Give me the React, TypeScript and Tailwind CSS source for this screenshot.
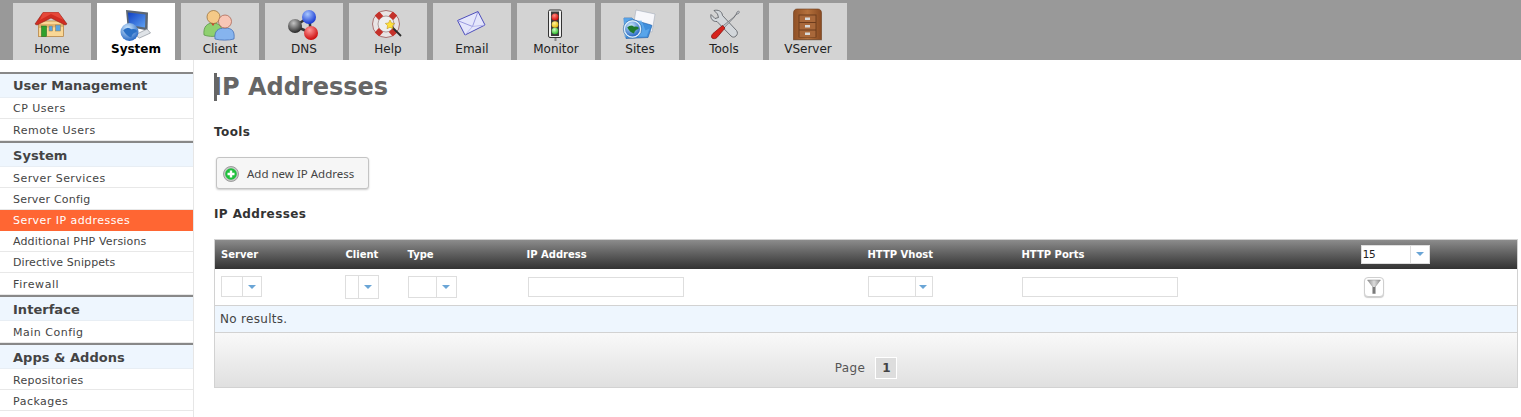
import React from "react";

const Ball = ({ id, c1, c2, cx, cy, r }: { id: string; c1: string; c2: string; cx: number; cy: number; r: number }) => (
  <>
    <defs>
      <radialGradient id={id} cx="40%" cy="30%" r="75%">
        <stop offset="0%" stopColor={c1} />
        <stop offset="100%" stopColor={c2} />
      </radialGradient>
    </defs>
    <circle cx={cx} cy={cy} r={r} fill={`url(#${id})`} />
  </>
);

const Globe = ({ id, cx, cy, r, land }: { id: string; cx: number; cy: number; r: number; land: string }) => (
  <>
    <Ball id={id} c1="#d4ecff" c2="#1a5fc0" cx={cx} cy={cy} r={r} />
    <path
      d={`M${cx - r * 0.7} ${cy - r * 0.2}q${r * 0.5} ${-r * 0.5} ${r * 0.9} ${-r * 0.1}q${r * 0.7} ${-r * 0.1} ${r * 0.6} ${r * 0.3}q${-r * 0.5} ${r * 0.1} ${-r * 0.6} ${r * 0.6}q${-r * 0.5} ${-r * 0.1} ${-r * 0.9} ${-r * 0.8}z`}
      fill={land}
    />
  </>
);

const Box = ({ x, children }: { x: number; children: React.ReactNode }) => (
  <svg width="36" height="36" viewBox={`${x} 6 36 36`} className="block shrink-0 overflow-visible">
    {children}
  </svg>
);

const HomeIcon = () => (
  <Box x={34}>
    <rect x="38.500" y="21" width="25" height="15.500" fill="#f9d796" stroke="#b07a35" strokeWidth="0.7" />
    <path d="M38.500 24h25v3l-25 1z" fill="#c98f44" opacity="0.5" />
    <path d="M35 24L43 12.500h15.500L67 24l-2 1-14-7-14 7z" fill="#d12d22" stroke="#8c1d14" strokeWidth="0.6" />
    <path d="M43 12.500h15.500l5 7.500-12.500-6-11 6z" fill="#e5483a" />
    <rect x="41.500" y="26" width="5" height="10.500" fill="#2ea02c" stroke="#14641a" strokeWidth="0.5" />
    <rect x="49" y="26" width="3.500" height="5" fill="#5aa5e0" stroke="#9a7a40" strokeWidth="0.5" />
    <rect x="55.500" y="25" width="5" height="6" fill="#5aa5e0" stroke="#9a7a40" strokeWidth="0.5" />
  </Box>
);

const SystemIcon = () => (
  <Box x={118}>
    <defs>
      <linearGradient id="sys-s" x1="0" y1="0" x2="1" y2="1">
        <stop offset="0%" stopColor="#0f3fc4" />
        <stop offset="100%" stopColor="#5fa2f2" />
      </linearGradient>
    </defs>
    <path d="M126 10l22 2.500-.5 18-20-4z" fill="#5c6672" />
    <path d="M128 12.500l17.500 2-.5 13-16-2.500z" fill="url(#sys-s)" />
    <path d="M135 35l12-6 3.500 4-11 5z" fill="#dfe3e7" stroke="#7d858e" strokeWidth="0.6" />
    <Globe id="sys-g" cx={129.500} cy={32} r={9} land="#2a70c6" />
  </Box>
);

const ClientIcon = () => (
  <Box x={202}>
    <path d="M204 35c-1-8 3-12 9-12s10 4 9 11c-5 3-13 3-18 1z" fill="#8fd06f" stroke="#4f8f3c" strokeWidth="0.7" />
    <path d="M211 23l2 3 2-3z" fill="#d13a2c" />
    <circle cx="213.500" cy="17" r="6.500" fill="#f5c987" stroke="#94692f" strokeWidth="0.7" />
    <path d="M215 39c-1-8 3-11 10-11s10 3 9 11c-5 1.500-14 1.500-19 0z" fill="#86b4ee" stroke="#3a66b0" strokeWidth="0.7" />
    <circle cx="225" cy="21.500" r="6.500" fill="#f8c6b6" stroke="#a85a48" strokeWidth="0.7" />
  </Box>
);

const DnsIcon = () => (
  <Box x={286}>
    <path d="M295 26L309 17M309 17L311 33M295 26L311 33" stroke="#333" strokeWidth="2.500" />
    <Ball id="dns-k" c1="#c4c4c4" c2="#1c1c1c" cx={295} cy={26} r={7} />
    <Ball id="dns-b" c1="#a9c8ff" c2="#0c2ecf" cx={309} cy={17} r={7} />
    <Ball id="dns-r" c1="#ff9a9a" c2="#c80000" cx={311} cy={33} r={7} />
  </Box>
);

const HelpIcon = () => (
  <Box x={370}>
    <circle cx="386" cy="24" r="11" fill="none" stroke="#e9e4e4" strokeWidth="5.500" />
    <circle cx="386" cy="24" r="13.500" fill="none" stroke="#7a2420" strokeWidth="0.6" />
    <circle cx="386" cy="24" r="8" fill="#eeeeee" stroke="#8a6a6a" strokeWidth="0.6" />
    <path d="M377 13.500l4 4.500M395 13.500l-4 4.500M377 34.500l4-4.500M395 34.500l-4-4.500" stroke="#c4312a" strokeWidth="6" />
    <path d="M392 27l9 9" stroke="#2a2a2a" strokeWidth="1.800" />
    <path d="M390 20l1.500 3 3.200.4-2.300 2.200.7 3.200-3.100-1.600-3 1.600.6-3.200-2.300-2.200 3.200-.4z" fill="#ffe13a" stroke="#b98a10" strokeWidth="0.5" />
  </Box>
);

const EmailIcon = () => (
  <Box x={454}>
    <path d="M457.500 20.500L478 11.500l7 13.500-20 10z" fill="#e4e6fb" stroke="#3d3db5" strokeWidth="0.9" strokeLinejoin="round" />
    <path d="M457.500 20.500l15 6 5.500-15" fill="none" stroke="#8585d8" strokeWidth="0.8" />
    <path d="M465 35l7.500-8.500 12.500-1.500" fill="none" stroke="#a9a9e6" strokeWidth="0.7" />
  </Box>
);

const MonitorIcon = () => (
  <Box x={538}>
    <rect x="554.500" y="36" width="2" height="5" fill="#888" />
    <rect x="548.500" y="10" width="13" height="27.500" rx="1.500" fill="#f2f2f2" stroke="#333" strokeWidth="1" />
    <rect x="551" y="11.500" width="8" height="24.500" fill="#3c3c3c" />
    <Ball id="m-r" c1="#ff8a80" c2="#d40000" cx={555} cy={17} r={3.500} />
    <Ball id="m-y" c1="#fff49a" c2="#e3b400" cx={555} cy={24.500} r={3.300} />
    <Ball id="m-g" c1="#d2ffc4" c2="#1fb51f" cx={555} cy={31} r={3.300} />
  </Box>
);

const SitesIcon = () => (
  <Box x={622}>
    <path d="M636 10l19 4-3 18-19-4z" fill="#f7f7fb" stroke="#9aa4b4" strokeWidth="0.5" />
    <path d="M624 18h8l2 2 17 5 1 .5-4 12-22 1z" fill="#3f8fdd" stroke="#1c5aa5" strokeWidth="0.6" />
    <path d="M623.500 18h9l2 3 7-.5 4 10 4-2-3 8-22 .5z" fill="#64aef0" opacity="0.7" />
    <circle cx="632.500" cy="29" r="9.200" fill="#dff0fb" stroke="#1b5aa0" strokeWidth="0.6" />
    <Globe id="s-g" cx={632.500} cy={29} r={7.500} land="#1e7a2e" />
  </Box>
);

const ToolsIcon = () => (
  <Box x={706}>
    <path d="M711 14.500l4 4 3.500-1-1-3.500-3.500-3.500c4-1 8 .5 8.500 5l14 15c1.500 2 1 4-.5 5.500s-3.500 1.500-5 0L717 21.500c-4 .5-7-3-6-7z" fill="#d3d7db" stroke="#54585e" strokeWidth="0.8" strokeLinejoin="round" />
    <path d="M734 17l2-2.500 1-2.500 1.500-1 1 1-1 1.500-2.500 1-2 3-13 13.500-2-2z" fill="#c7cbd0" stroke="#54585e" strokeWidth="0.6" />
    <path d="M722.500 25.500l2.500 2.500-8 9.500c-1.500 1.500-4 1.500-5 .5s-.5-3 1-4.500z" fill="#d6231c" stroke="#7c0f0c" strokeWidth="0.7" />
  </Box>
);

const VServerIcon = () => (
  <Box x={790}>
    <defs>
      <linearGradient id="vs-b" x1="0" y1="0" x2="1" y2="0">
        <stop offset="0%" stopColor="#8f5026" />
        <stop offset="50%" stopColor="#b5713c" />
        <stop offset="100%" stopColor="#8a4b22" />
      </linearGradient>
    </defs>
    <rect x="793" y="39" width="29" height="1.500" fill="#a9a39c" />
    <path d="M793.500 13c0-2.500 1.500-4 3.500-4h21c2 0 3.500 1.500 3.500 4v26.500h-28z" fill="url(#vs-b)" stroke="#6b3a1a" strokeWidth="0.6" />
    <rect x="798.500" y="14.500" width="18" height="23" fill="#6d3c1d" />
    <rect x="799.500" y="15.500" width="16" height="6.500" fill="#a9683a" />
    <rect x="799.500" y="23" width="16" height="6.500" fill="#a9683a" />
    <rect x="799.500" y="30.500" width="16" height="6.500" fill="#a9683a" />
    <rect x="805" y="17.500" width="5" height="2.500" fill="#d9d9d9" />
    <rect x="805" y="25" width="5" height="2.500" fill="#d9d9d9" />
    <rect x="805" y="32.500" width="5" height="2.500" fill="#d9d9d9" />
  </Box>
);

const tabs: { label: string; icon: React.ReactNode; active?: boolean }[] = [
  { label: "Home", icon: <HomeIcon /> },
  { label: "System", icon: <SystemIcon />, active: true },
  { label: "Client", icon: <ClientIcon /> },
  { label: "DNS", icon: <DnsIcon /> },
  { label: "Help", icon: <HelpIcon /> },
  { label: "Email", icon: <EmailIcon /> },
  { label: "Monitor", icon: <MonitorIcon /> },
  { label: "Sites", icon: <SitesIcon /> },
  { label: "Tools", icon: <ToolsIcon /> },
  { label: "VServer", icon: <VServerIcon /> },
];

type Item = { t: string; ls: string; pt: string; tall?: boolean };

const groups: { title: string; pt: string; items: Item[] }[] = [
  {
    title: "User Management",
    pt: "pt-[1px]",
    items: [
      { t: "CP Users", ls: "tracking-[0.5px]", pt: "pt-[2px]" },
      { t: "Remote Users", ls: "tracking-[0.5px]", pt: "pt-[4px]", tall: true },
    ],
  },
  {
    title: "System",
    pt: "pt-[3px]",
    items: [
      { t: "Server Services", ls: "tracking-[0.45px]", pt: "pt-[4px]" },
      { t: "Server Config", ls: "tracking-[0.2px]", pt: "pt-[4px]", tall: true },
      { t: "Server IP addresses", ls: "tracking-[0.45px]", pt: "pt-[2px]" },
      { t: "Additional PHP Versions", ls: "tracking-[0.15px]", pt: "pt-[2px]" },
      { t: "Directive Snippets", ls: "tracking-[0.1px]", pt: "pt-[2px]" },
      { t: "Firewall", ls: "tracking-[0.6px]", pt: "pt-[4px]", tall: true },
    ],
  },
  {
    title: "Interface",
    pt: "pt-[3px]",
    items: [{ t: "Main Config", ls: "tracking-[0.5px]", pt: "pt-[4px]", tall: true }],
  },
  {
    title: "Apps & Addons",
    pt: "pt-[3px]",
    items: [
      { t: "Repositories", ls: "tracking-[0.25px]", pt: "pt-[4px]" },
      { t: "Packages", ls: "tracking-[0.5px]", pt: "pt-[4px]" },
      { t: "", ls: "", pt: "" },
    ],
  },
];

const Arrow = () => (
  <span className="block h-0 w-0 border-x-[4px] border-t-[4px] border-x-transparent border-t-[#6aa5d6]" />
);

const Combo = ({ left, right, h }: { left: number; right: number; h: string }) => (
  <div className={`flex items-stretch border border-[#dedede] bg-white ${h}`} style={{ width: left + right + 3 }}>
    <span className="block border-r border-[#dedede]" style={{ width: left }} />
    <span className="flex items-center justify-center" style={{ width: right }}>
      <Arrow />
    </span>
  </div>
);

const TextBox = () => <div className="h-[20px] w-[156px] border border-[#dedede] bg-white" />;

const heads: { label: string; w: string }[] = [
  { label: "Server", w: "w-[124px] pl-[6px]" },
  { label: "Client", w: "w-[63px] pl-[7px]" },
  { label: "Type", w: "w-[119px] pl-[6px]" },
  { label: "IP Address", w: "w-[340px] pl-[6px]" },
  { label: "HTTP Vhost", w: "w-[154px] pl-[7px]" },
  { label: "HTTP Ports", w: "w-[340px] pl-[7px]" },
];

export default function App() {
  return (
    <div className="h-[417px] w-[1521px] overflow-hidden bg-white font-['DejaVu_Sans',sans-serif] text-[#444]">
      <nav className="flex h-[60px] gap-[6px] bg-[#999999] pl-[13px] pt-[3px]">
        {tabs.map((t) => (
          <div
            key={t.label}
            className={`flex h-[57px] w-[78px] flex-col items-center pt-[3px] text-[12px] leading-[14px] ${
              t.active ? "bg-white font-bold text-black" : "bg-[#d3d3d3] text-[#222]"
            }`}
          >
            {t.icon}
            <span>{t.label}</span>
          </div>
        ))}
      </nav>
      <div className="flex h-[357px]">
        <aside className="w-[194px] shrink-0 border-r border-[#e6e6e6] pt-[12px]">
          {groups.map((g) => (
            <div key={g.title}>
              <div className={`box-border flex h-[26px] items-center border-t-2 border-b border-t-[#888888] border-b-[#e8eef4] bg-[#eef6fe] pl-[13px] text-[13px] font-bold tracking-[0.03px] text-[#444] ${g.pt}`}>
                {g.title}
              </div>
              {g.items.map((i) => (
                <div
                  key={i.t + g.title}
                  className={`box-border flex items-center border-b pl-[13px] text-[11px] ${i.ls} ${i.pt} ${
                    i.tall ? "h-[22px]" : "h-[21px]"
                  } ${
                    i.t === "Server IP addresses"
                      ? "border-b-[#ff6633] bg-[#ff6633] text-white"
                      : "border-b-[#e8e8e8] text-[#444]"
                  }`}
                >
                  {i.t}
                </div>
              ))}
            </div>
          ))}
        </aside>
        <main className="flex-1 pl-[20px] pr-[3px]">
          <h1 className="mt-[13px] h-[28px] border-l-[3px] border-l-[#666666] text-[24px] font-bold leading-[28px] text-[#666666]">
            <span className="-ml-[4px]">IP Addresses</span>
          </h1>
          <h2 className="mt-[24px] h-[14px] text-[12px] font-bold leading-[14px] tracking-[0.4px] text-[#333]">Tools</h2>
          <button className="ml-[2px] mt-[18px] flex h-[32px] w-[153px] items-center rounded-[3px] border border-[#c4c4c4] bg-[#f6f6f6] pl-[6px] pt-[1px] font-['Noto_Sans',sans-serif] text-[11.5px] text-[#444] shadow-[0_1px_2px_rgba(0,0,0,0.2)]">
            <svg width="16" height="16" viewBox="0 0 16 16" className="shrink-0">
              <circle cx="8" cy="8" r="7.500" fill="#c9c9c9" stroke="#8c8c8c" strokeWidth="0.8" />
              <circle cx="8" cy="8" r="5.800" fill="#1fc03c" />
              <path d="M8 4.500v7M4.500 8h7" stroke="#fff" strokeWidth="2.400" />
            </svg>
            <span className="ml-[8px]">Add new IP Address</span>
          </button>
          <h2 className="mt-[18px] h-[14px] text-[12px] font-bold leading-[14px] tracking-[0.4px] text-[#333]">IP Addresses</h2>
          <table className="mt-[18px] w-[1304px] table-fixed border-collapse border border-[#d2d2d2]">
            <thead>
              <tr className="h-[29px] bg-gradient-to-b from-[#8c8c8c] to-[#333333]">
                {heads.map((h) => (
                  <th key={h.label} className={`${h.w} text-left text-[10px] font-bold text-white`}>
                    {h.label}
                  </th>
                ))}
                <th className="pl-[6px] text-left align-middle">
                  <div className="flex h-[19px] w-[69px] border border-[#dedede] bg-white font-['DejaVu_Sans_Mono',monospace] text-[11px] font-normal text-[#222]">
                    <span className="w-[49px] border-r border-[#dedede] pl-[1px] leading-[17px]">15</span>
                    <span className="flex flex-1 items-center justify-center">
                      <Arrow />
                    </span>
                  </div>
                </th>
              </tr>
            </thead>
            <tbody>
              <tr className="h-[37px] border-b border-[#d2d2d2]">
                <td className="pl-[6px]"><Combo left={21} right={17} h="h-[21px]" /></td>
                <td className="pl-[6px]"><Combo left={13} right={18} h="h-[24px]" /></td>
                <td className="pl-[6px]"><Combo left={28} right={18} h="h-[22px]" /></td>
                <td className="pl-[7px]"><TextBox /></td>
                <td className="pl-[7px]"><Combo left={47} right={15} h="h-[21px]" /></td>
                <td className="pl-[7px]"><TextBox /></td>
                <td className="pl-[9px]">
                  <div className="flex h-[20px] w-[20px] items-center justify-center rounded-[4px] border border-[#cfcfcf] bg-white shadow-[0_1px_1px_rgba(0,0,0,0.2)]">
                    <svg width="14" height="16" viewBox="0 0 14 16">
                      <defs>
                        <linearGradient id="fn" x1="0" y1="0" x2="1" y2="0">
                          <stop offset="0%" stopColor="#8f8f8f" />
                          <stop offset="50%" stopColor="#dcdcdc" />
                          <stop offset="100%" stopColor="#8f8f8f" />
                        </linearGradient>
                      </defs>
                      <path d="M0.500 1h13L8.500 7.500v7h-3v-7z" fill="url(#fn)" stroke="#8a8a8a" strokeWidth="0.5" />
                      <path d="M6 8h2v6.500H6z" fill="#7a7a7a" />
                    </svg>
                  </div>
                </td>
              </tr>
              <tr className="h-[27px] border-b border-[#d2d2d2] bg-[#eef6fe]">
                <td colSpan={7} className="pl-[5px] text-[12px] tracking-[0.3px] text-[#444]">No results.</td>
              </tr>
              <tr className="h-[55px] border-b border-[#d2d2d2] bg-gradient-to-b from-[#f9f9f9] to-[#e0e0e0]">
                <td colSpan={7} className="pt-[16px] text-[12px]">
                  <div className="flex items-center justify-center gap-[10px]">
                    <span className="tracking-[0.4px] text-[#555]">Page</span>
                    <span className="flex h-[22px] w-[22px] items-center justify-center border border-white bg-[#dddddd] font-bold text-[#444]">1</span>
                  </div>
                </td>
              </tr>
            </tbody>
          </table>
        </main>
      </div>
    </div>
  );
}
